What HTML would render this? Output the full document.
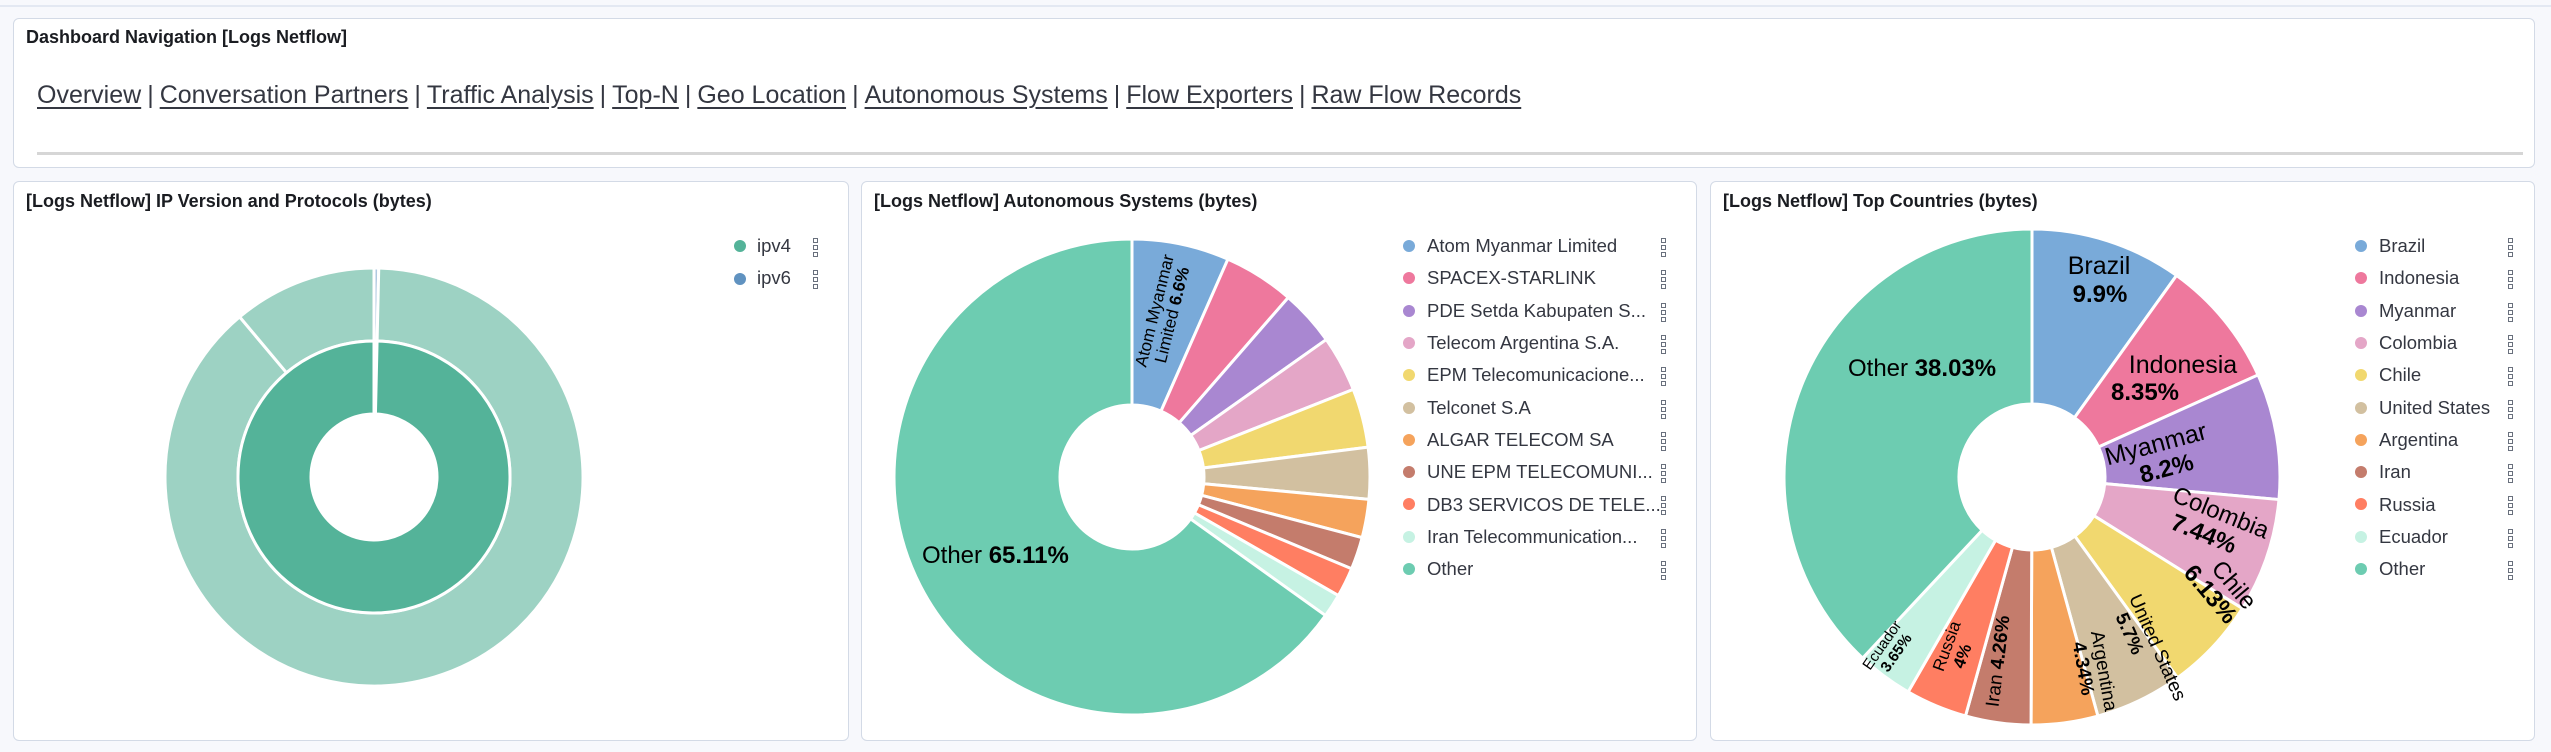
<!DOCTYPE html>
<html><head><meta charset="utf-8"><style>
html,body{margin:0;padding:0;width:2551px;height:752px;background:#f7f8fc;overflow:hidden;font-family:"Liberation Sans",sans-serif;color:#1a1c21}
.topline{position:absolute;left:0;top:0;width:2551px;height:5px;border-bottom:2px solid #e3e8f2;background:#f7f8fc}
.panel{position:absolute;background:#fff;border:1px solid #d3dae6;border-radius:6px;box-sizing:border-box}
.title{position:absolute;left:12px;top:9px;font-weight:bold;font-size:18px;color:#1a1c21;white-space:nowrap}
.nav{position:absolute;left:23px;top:62px;font-size:25px;color:#343741;white-space:nowrap}
.nav a{color:#343741;text-decoration:underline;text-underline-offset:4px}
.nav .sep{margin:0 6px}
.hr{position:absolute;left:23px;top:133px;width:2486px;height:3px;background:#d6d6d6}
svg{position:absolute;left:0;top:0}
.leg{position:absolute;font-size:18.5px;color:#343741;white-space:nowrap}
.dot{position:absolute;width:12px;height:12px;border-radius:6px}
.dots{position:absolute;width:5px}
.dots i{display:block;width:3px;height:3px;border:1px solid #69707d;margin-bottom:2px}
</style></head><body>
<div class="topline"></div>
<div class="panel" style="left:13px;top:18px;width:2522px;height:150px">
<div class="title" style="top:8px">Dashboard Navigation [Logs Netflow]</div>
<div class="nav"><a>Overview</a><span class="sep">|</span><a>Conversation Partners</a><span class="sep">|</span><a>Traffic Analysis</a><span class="sep">|</span><a>Top-N</a><span class="sep">|</span><a>Geo Location</a><span class="sep">|</span><a>Autonomous Systems</a><span class="sep">|</span><a>Flow Exporters</a><span class="sep">|</span><a>Raw Flow Records</a></div>
<div class="hr"></div>
</div>

<div class="panel" style="left:13px;top:181px;width:836px;height:560px"><div class="title">[Logs Netflow] IP Version and Protocols (bytes)</div></div>
<div class="panel" style="left:861px;top:181px;width:836px;height:560px"><div class="title">[Logs Netflow] Autonomous Systems (bytes)</div></div>
<div class="panel" style="left:1710px;top:181px;width:825px;height:560px"><div class="title">[Logs Netflow] Top Countries (bytes)</div></div>

<svg id="s" width="2551" height="752" font-family="Liberation Sans, sans-serif">
<g id="g"></g>
<g font-size="24" fill="#000">
<text x="922" y="563">Other <tspan font-weight="bold">65.11%</tspan></text>
<text x="1848" y="376">Other <tspan font-weight="bold">38.03%</tspan></text>
<text x="2099" y="274" text-anchor="middle" font-size="25">Brazil</text>
<text x="2100" y="302" text-anchor="middle" font-weight="bold">9.9%</text>
<text x="2183" y="373" text-anchor="middle" font-size="25">Indonesia</text>
<text x="2145" y="400" text-anchor="middle" font-weight="bold">8.35%</text>
<g transform="translate(2158,452) rotate(-15)"><text text-anchor="middle" font-size="25">Myanmar</text><text y="26" x="4" text-anchor="middle" font-weight="bold">8.2%</text></g>
<g transform="translate(2218,520) rotate(22)"><text text-anchor="middle" font-size="24">Colombia</text><text y="26" x="-8" text-anchor="middle" font-weight="bold">7.44%</text></g>
<g transform="translate(2228,590) rotate(50)"><text text-anchor="middle" font-size="24">Chile</text><text y="24" x="-8" text-anchor="middle" font-weight="bold">6.13%</text></g>
<g transform="translate(2152,650) rotate(66)"><text text-anchor="middle" font-size="19">United States</text><text y="20" x="-24" text-anchor="middle" font-weight="bold" font-size="19">5.7%</text></g>
<g transform="translate(2098,672) rotate(80)"><text text-anchor="middle" font-size="19">Argentina</text><text y="20" x="-6" text-anchor="middle" font-weight="bold" font-size="19">4.34%</text></g>
<g transform="translate(2004,662) rotate(-83)"><text text-anchor="middle" font-size="19">Iran <tspan font-weight="bold">4.26%</tspan></text></g>
<g transform="translate(1952,648) rotate(-70)"><text text-anchor="middle" font-size="17">Russia</text><text y="18" x="-4" text-anchor="middle" font-weight="bold" font-size="17">4%</text></g>
<g transform="translate(1886,648) rotate(-55)"><text text-anchor="middle" font-size="15">Ecuador</text><text y="16" x="2" text-anchor="middle" font-weight="bold" font-size="15">3.65%</text></g>
<g transform="translate(1160,312) rotate(-76)"><text text-anchor="middle" font-size="17">Atom Myanmar</text><text y="18" text-anchor="middle" font-size="17">Limited <tspan font-weight="bold">6.6%</tspan></text></g>
</g>
</svg>

<div id="legends">
<div class="dot" style="left:734px;top:240px;background:#54b399"></div><div class="leg" style="left:757px;top:235px">ipv4</div>
<div class="dot" style="left:734px;top:273px;background:#6092c0"></div><div class="leg" style="left:757px;top:267px">ipv6</div>
<div class="dots" style="left:813px;top:238px"><i></i><i></i><i></i></div>
<div class="dots" style="left:813px;top:270px"><i></i><i></i><i></i></div>

<div class="leg" style="left:1427px;top:235px">Atom Myanmar Limited</div>
<div class="leg" style="left:1427px;top:267px">SPACEX-STARLINK</div>
<div class="leg" style="left:1427px;top:300px">PDE Setda Kabupaten S...</div>
<div class="leg" style="left:1427px;top:332px">Telecom Argentina S.A.</div>
<div class="leg" style="left:1427px;top:364px">EPM Telecomunicacione...</div>
<div class="leg" style="left:1427px;top:397px">Telconet S.A</div>
<div class="leg" style="left:1427px;top:429px">ALGAR TELECOM SA</div>
<div class="leg" style="left:1427px;top:461px">UNE EPM TELECOMUNI...</div>
<div class="leg" style="left:1427px;top:494px">DB3 SERVICOS DE TELE...</div>
<div class="leg" style="left:1427px;top:526px">Iran Telecommunication...</div>
<div class="leg" style="left:1427px;top:558px">Other</div>

<div class="leg" style="left:2379px;top:235px">Brazil</div>
<div class="leg" style="left:2379px;top:267px">Indonesia</div>
<div class="leg" style="left:2379px;top:300px">Myanmar</div>
<div class="leg" style="left:2379px;top:332px">Colombia</div>
<div class="leg" style="left:2379px;top:364px">Chile</div>
<div class="leg" style="left:2379px;top:397px">United States</div>
<div class="leg" style="left:2379px;top:429px">Argentina</div>
<div class="leg" style="left:2379px;top:461px">Iran</div>
<div class="leg" style="left:2379px;top:494px">Russia</div>
<div class="leg" style="left:2379px;top:526px">Ecuador</div>
<div class="leg" style="left:2379px;top:558px">Other</div>
</div>
<div id="dl"></div>

<script>
var NS="http://www.w3.org/2000/svg",g=document.getElementById("g");
function pt(cx,cy,r,a){a=(a-90)*Math.PI/180;return [cx+r*Math.cos(a),cy+r*Math.sin(a)];}
function arc(cx,cy,r0,r1,a0,a1,fill,sw){
 var l=(a1-a0)>180?1:0,p1=pt(cx,cy,r1,a0),p2=pt(cx,cy,r1,a1),p3=pt(cx,cy,r0,a1),p4=pt(cx,cy,r0,a0);
 var d="M"+p1+"A"+r1+","+r1+" 0 "+l+" 1 "+p2+"L"+p3+"A"+r0+","+r0+" 0 "+l+" 0 "+p4+"Z";
 var e=document.createElementNS(NS,"path");e.setAttribute("d",d);e.setAttribute("fill",fill);
 e.setAttribute("stroke","#fff");e.setAttribute("stroke-width",sw||3);g.appendChild(e);}
arc(374,477,136,209,0,1.3,"#b0c9e0");
arc(374,477,136,209,1.3,320,"#9dd2c3");
arc(374,477,136,209,320,360,"#9dd2c3");
arc(374,477,63,136,0,1.3,"#6092c0");
arc(374,477,63,136,1.3,360,"#54b399");
var cols=["#79aad9","#ee789d","#a987d1","#e4a6c7","#f1d86f","#d2c0a0","#f5a35c","#c47c6c","#ff7e62","#c6f2e3","#6dccb1"];
function pie(cx,cy,r0,r1,vals){var a=0;vals.forEach(function(v,i){var b=a+v*3.6;arc(cx,cy,r0,r1,a,b,cols[i]);a=b;});}
pie(1132,477,72,238,[6.6,4.8,3.8,3.8,4.0,3.5,2.6,2.2,2.0,1.59,65.11]);
pie(2032,477,73,248,[9.9,8.35,8.2,7.44,6.13,5.7,4.34,4.26,4,3.65,38.03]);
var dl=document.getElementById("dl"),h="";
for(var i=0;i<11;i++){var y=240+i*32.3;
 h+='<div class="dot" style="left:1403px;top:'+y+'px;background:'+cols[i]+'"></div>';
 h+='<div class="dot" style="left:2355px;top:'+y+'px;background:'+cols[i]+'"></div>';
 h+='<div class="dots" style="left:1661px;top:'+(y-2)+'px"><i></i><i></i><i></i></div>';
 h+='<div class="dots" style="left:2508px;top:'+(y-2)+'px"><i></i><i></i><i></i></div>';}
dl.innerHTML=h;
</script>
</body></html>
